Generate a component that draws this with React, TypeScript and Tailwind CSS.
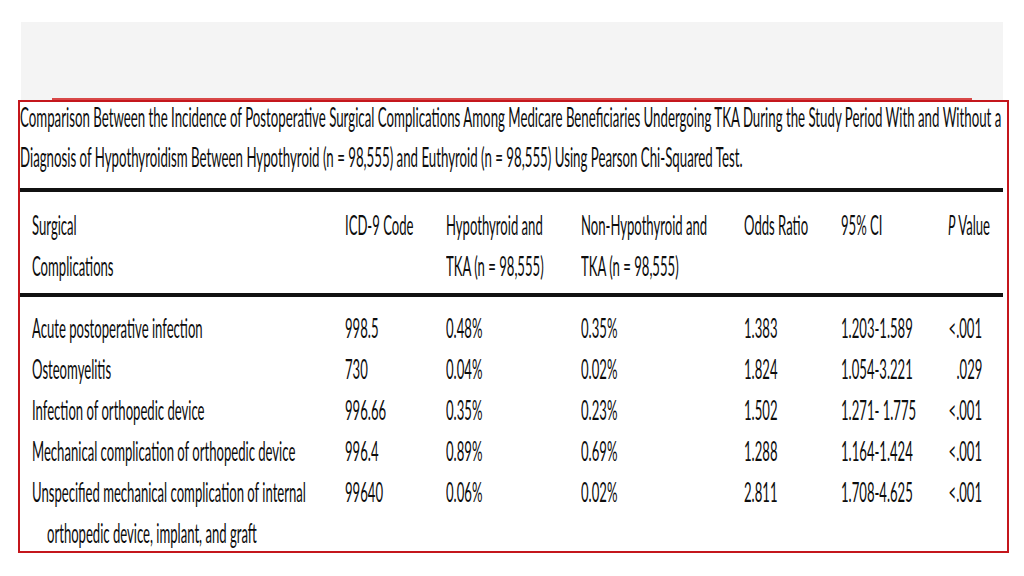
import type { ReactNode } from 'react'

// The source table is set in a very narrow face; we squeeze Lato horizontally.
function T({ children, right = false, wide = false }: { children: ReactNode; right?: boolean; wide?: boolean }) {
  return (
    <span
      className={
        'inline-block whitespace-nowrap ' +
        (wide ? 'scale-x-[0.491] ' : 'scale-x-[0.485] ') +
        (right ? 'origin-right' : 'origin-left')
      }
    >
      {children}
    </span>
  )
}

type Row = {
  name: string[]
  code: string
  hypo: string
  non: string
  or: string
  ci: string
  p: string
}

const rows: Row[] = [
  { name: ['Acute postoperative infection'], code: '998.5', hypo: '0.48%', non: '0.35%', or: '1.383', ci: '1.203-1.589', p: '<.001' },
  { name: ['Osteomyelitis'], code: '730', hypo: '0.04%', non: '0.02%', or: '1.824', ci: '1.054-3.221', p: '.029' },
  { name: ['Infection of orthopedic device'], code: '996.66', hypo: '0.35%', non: '0.23%', or: '1.502', ci: '1.271- 1.775', p: '<.001' },
  { name: ['Mechanical complication of orthopedic device'], code: '996.4', hypo: '0.89%', non: '0.69%', or: '1.288', ci: '1.164-1.424', p: '<.001' },
  {
    name: ['Unspecified mechanical complication of internal', 'orthopedic device, implant, and graft'],
    code: '99640',
    hypo: '0.06%',
    non: '0.02%',
    or: '2.811',
    ci: '1.708-4.625',
    p: '<.001',
  },
]

const cols = 'grid grid-cols-[313px_101px_135px_163px_97px_107px_55px] pl-[12px]'

export default function App() {
  return (
    <div className="h-[576px] w-[1024px] overflow-hidden bg-white pt-[22px] font-[family-name:Lato,sans-serif] text-[27px] text-[#0d0d0d]">
      {/* grey banner with the red underline */}
      <div className="ml-[21px] flex h-[78px] w-[982px] flex-col justify-end bg-[#f4f4f4]">
        <div className="ml-[31px] h-[2px] w-[920px] bg-[#d84848]" />
      </div>

      <div className="ml-[18px] h-[453px] w-[991px] overflow-hidden border-2 border-[#c4161c]">
        <div className="-mt-[5px] leading-[40px]">
          <div>
            <T wide>
              Comparison Between the Incidence of Postoperative Surgical Complications Among Medicare Beneficiaries
              Undergoing TKA During the Study Period With and Without a
            </T>
          </div>
          <div>
            <T wide>
              Diagnosis of Hypothyroidism Between Hypothyroid (n = 98,555) and Euthyroid (n = 98,555) Using Pearson
              Chi-Squared Test.
            </T>
          </div>
        </div>

        <div className="mt-[11px] h-[4px] w-[983px] bg-[#111]" />

        <div className={cols + ' pt-[12px] pb-[7px] leading-[41px]'}>
          <div>
            <div><T>Surgical</T></div>
            <div><T>Complications</T></div>
          </div>
          <div><T>ICD-9 Code</T></div>
          <div>
            <div><T>Hypothyroid and</T></div>
            <div><T>TKA (n = 98,555)</T></div>
          </div>
          <div>
            <div><T>Non-Hypothyroid and</T></div>
            <div><T>TKA (n = 98,555)</T></div>
          </div>
          <div><T>Odds Ratio</T></div>
          <div><T>95% CI</T></div>
          <div>
            <T>
              <i>P</i> Value
            </T>
          </div>
        </div>

        <div className="h-[4px] w-[983px] bg-[#111]" />

        <div className="pt-[10px] leading-[41px]">
          {rows.map((r) => (
            <div key={r.code} className={cols}>
              <div>
                {r.name.map((line, i) => (
                  <div key={line} className={i > 0 ? 'pl-[15px]' : ''}>
                    <T>{line}</T>
                  </div>
                ))}
              </div>
              <div><T>{r.code}</T></div>
              <div><T>{r.hypo}</T></div>
              <div><T>{r.non}</T></div>
              <div><T>{r.or}</T></div>
              <div><T>{r.ci}</T></div>
              <div className="flex justify-end pr-[21px]">
                <T right>{r.p}</T>
              </div>
            </div>
          ))}
        </div>
      </div>
    </div>
  )
}
